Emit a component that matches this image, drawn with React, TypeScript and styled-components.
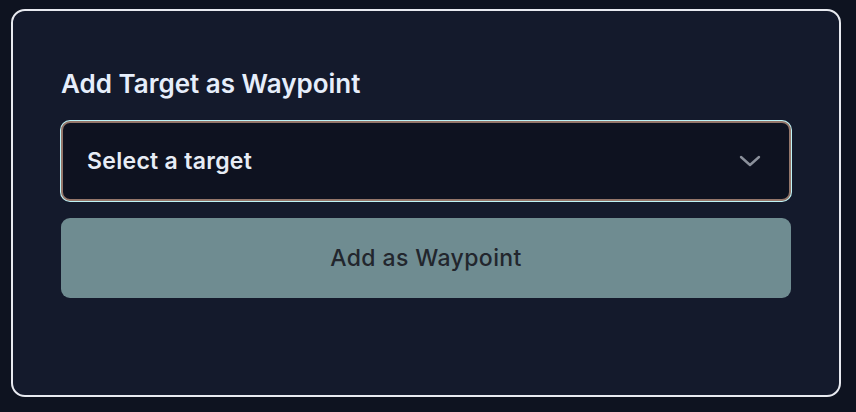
import React from "react";
import styled, { createGlobalStyle } from "styled-components";

const Global = createGlobalStyle`
  html, body { margin: 0; padding: 0; background: #0e1320; }
  body { font-family: "Inter", "Noto Sans", sans-serif; }
  * { box-sizing: border-box; }
`;

const Page = styled.div`
  padding: 9px 15px 15px 11px;
  width: 856px;
  height: 412px;
`;

const Card = styled.section`
  width: 830px;
  height: 388px;
  background: #141a2c;
  border: 2px solid #e8eaf0;
  border-radius: 14px;
  padding: 56px 48px 48px 48px;
  display: flex;
  flex-direction: column;
`;

const Title = styled.h2`
  margin: 0 0 20px 0;
  font-family: "Inter", sans-serif;
  font-weight: 600;
  font-size: 26px;
  letter-spacing: 0px;
  line-height: 34px;
  color: #e6eefb;
`;

const SelectBox = styled.div`
  height: 80px;
  border-radius: 9px;
  border: 2px solid #94766a;
  box-shadow: 0 0 0 1px #bff3f6;
  background: #0e1220;
  display: flex;
  align-items: center;
  justify-content: space-between;
  padding: 0 28px 0 24px;
  margin-bottom: 17px;
`;

const SelectText = styled.span`
  font-family: "Inter", sans-serif;
  font-weight: 600;
  font-size: 23px;
  letter-spacing: 0.3px;
  color: #e7ecf5;
`;

const Button = styled.button`
  height: 80px;
  border: none;
  border-radius: 9px;
  background: #6f8c91;
  color: #22262d;
  font-family: "Inter", sans-serif;
  font-weight: 500;
  font-size: 23px;
  letter-spacing: 0.4px;
  display: flex;
  align-items: center;
  justify-content: center;
`;

const Chevron = () => (
  <svg width="22" height="14" viewBox="0 0 22 14" fill="none">
    <path d="M2 3 L11 11 L20 3" stroke="#8b909b" strokeWidth="2.4" strokeLinecap="round" strokeLinejoin="round" />
  </svg>
);

export default function App() {
  return (
    <>
      <Global />
      <Page>
        <Card>
          <Title>Add Target as Waypoint</Title>
          <SelectBox>
            <SelectText>Select a target</SelectText>
            <Chevron />
          </SelectBox>
          <Button>Add as Waypoint</Button>
        </Card>
      </Page>
    </>
  );
}
